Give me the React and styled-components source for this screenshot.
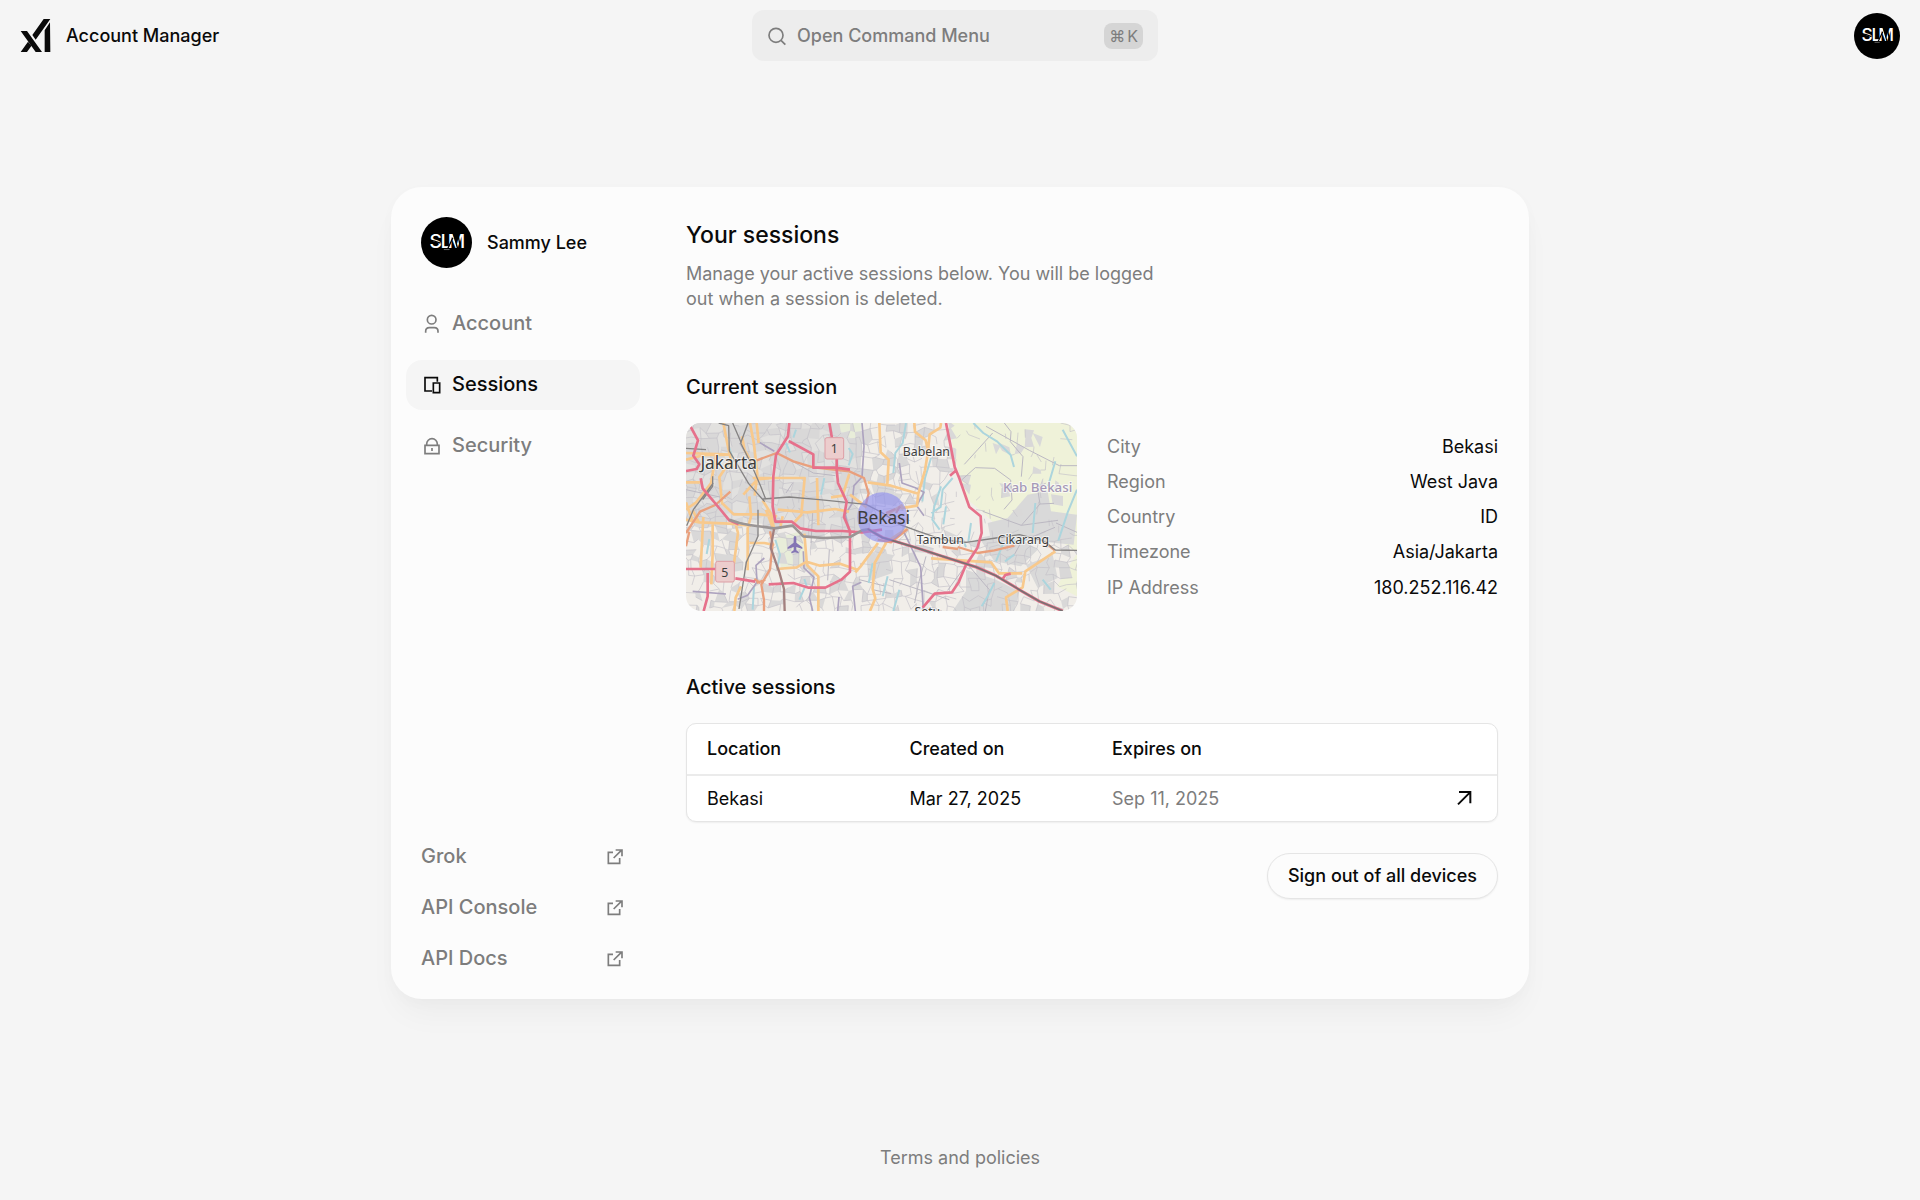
import React from "react";
import styled, { createGlobalStyle } from "styled-components";

const GlobalStyle = createGlobalStyle`
  * {
    box-sizing: border-box;
  }

  body {
    margin: 0;
    background: #f5f5f5;
    color: #0a0a0a;
    font-family: Inter, "Liberation Sans", sans-serif;
    font-size: 18px;
    line-height: 25px;
  }

  button {
    font: inherit;
    color: inherit;
    cursor: pointer;
  }

  a {
    color: inherit;
    text-decoration: none;
  }

  h1, h2, p, dl, dd {
    margin: 0;
  }
`;

const Page = styled.div`
  display: flex;
  flex-direction: column;
  min-height: 100vh;
`;

const Header = styled.header`
  display: grid;
  grid-template-columns: 1fr minmax(200px, 406px) 1fr;
  align-items: center;
  height: 71px;
  padding: 0 30px 0 20px;
`;

const Brand = styled.a`
  display: flex;
  align-items: center;
  gap: 15px;
  font-weight: 500;
`;

const SearchButton = styled.button`
  display: flex;
  align-items: center;
  gap: 10px;
  height: 51px;
  padding: 0 15px;
  border: 0;
  border-radius: 12px;
  background: #ededed;
  color: #7d7d7d;
  font-weight: 500;
`;

const Shortcut = styled.kbd`
  display: flex;
  gap: 2px;
  margin-left: auto;
  padding: 0 5px;
  border-radius: 8px;
  background: #d5d5d5;
  font-family: inherit;
  font-size: 16px;
  font-weight: 400;
  line-height: 26px;
`;

const AvatarButton = styled.button`
  display: flex;
  justify-self: end;
  margin-right: -10px;
  padding: 0;
  border: 0;
  border-radius: 50%;
  background: none;
`;

const Main = styled.main`
  display: flex;
  flex: 1;
  align-items: center;
  justify-content: center;
`;

const Card = styled.div`
  display: flex;
  width: 100%;
  max-width: 1138px;
  min-height: 812px;
  border-radius: 31px;
  background: #fcfcfc;
  box-shadow: 0 20px 32px -6px rgba(0, 0, 0, 0.04), 0 4px 16px rgba(0, 0, 0, 0.02);
`;

const Sidebar = styled.aside`
  display: flex;
  flex-direction: column;
  justify-content: space-between;
  flex: 0 0 264px;
  padding: 30px 15px 15px;
`;

const Profile = styled.div`
  display: flex;
  align-items: center;
  gap: 15px;
  margin-bottom: 31px;
  padding: 0 15px;
  font-weight: 500;
`;

const NavList = styled.nav`
  display: flex;
  flex-direction: column;
  gap: ${(props) => props.$gap}px;
`;

const NavItem = styled.a`
  display: flex;
  align-items: center;
  justify-content: ${(props) => (props.$spread ? "space-between" : "flex-start")};
  gap: 9px;
  height: 50px;
  padding: 0 15px;
  border-radius: 16px;
  background: ${(props) => (props.$active ? "#f5f5f5" : "transparent")};
  color: ${(props) => (props.$active ? "#0a0a0a" : "#7d7d7d")};
  font-size: 20px;
  font-weight: 500;
`;

const Content = styled.section`
  flex: 1;
  min-width: 0;
  padding: 31px;
`;

const Title = styled.h1`
  margin-bottom: 8px;
  font-size: 23px;
  font-weight: 500;
  line-height: 35px;
`;

const Description = styled.p`
  max-width: 480px;
  color: #7d7d7d;
`;

const SectionTitle = styled.h2`
  margin: 61px 0 20px;
  font-size: 20px;
  font-weight: 500;
  line-height: 31px;
`;

const CurrentSession = styled.div`
  display: grid;
  grid-template-columns: 1fr 1fr;
  gap: 30px;
`;

const Map = styled.svg`
  display: block;
  width: 100%;
  height: auto;
  border-radius: 15px;
`;

const Details = styled.dl`
  display: flex;
  flex-direction: column;
  justify-content: space-between;
  padding: 11px 0;
`;

const Detail = styled.div`
  display: flex;
  justify-content: space-between;

  dt {
    color: #7d7d7d;
  }
`;

const TableFrame = styled.div`
  overflow: hidden;
  border: 1px solid #e5e5e5;
  border-radius: 10px;
  background: #fff;
  box-shadow: 0 1px 2px rgba(0, 0, 0, 0.06);
`;

const Table = styled.table`
  width: 100%;
  border-collapse: collapse;
  table-layout: fixed;

  th,
  td {
    height: 46px;
    padding: 0 20px;
    text-align: left;
  }

  th {
    height: 51px;
    border-bottom: 2px solid #ebebeb;
    font-weight: 500;
  }
`;

const MutedCell = styled.td`
  color: #7d7d7d;
`;

const OpenButton = styled.button`
  display: flex;
  margin-left: auto;
  padding: 2px 3px;
  border: 0;
  background: none;
`;

const Actions = styled.div`
  display: flex;
  justify-content: flex-end;
  margin-top: 31px;
`;

const PillButton = styled.button`
  height: 46px;
  padding: 0 20px;
  border: 1px solid #e5e5e5;
  border-radius: 23px;
  background: #fcfcfc;
  box-shadow: 0 1px 2px rgba(0, 0, 0, 0.06);
  font-weight: 500;
`;

const Footer = styled.footer`
  display: flex;
  align-items: center;
  justify-content: center;
  height: 86px;
  color: #7d7d7d;
`;

const Icon = ({ size = 22, box = "0 0 66 66", children }) => (
  <svg
    width={size}
    height={size}
    viewBox={box}
    fill="none"
    stroke="currentColor"
    strokeWidth="5"
    aria-hidden="true"
  >
    {children}
  </svg>
);

const Logo = () => (
  <svg width="31" height="35" viewBox="60 52 93 105" fill="#0a0a0a" aria-hidden="true">
    <path d="M62 91h19l45 63h-19zM62 154h19l13-18-10-13zM151 55h-20L97 103l10 14zM134 89l16-24 1 89h-17z" />
  </svg>
);

const Avatar = ({ size }) => (
  <svg width={size} height={size} viewBox="0 0 152 152" role="img" aria-label="SLM">
    <circle cx="76" cy="76" r="76" fill="#000" />
    <text x="25" y="92" fill="#fff" fontFamily="Inter, sans-serif" fontSize="57" fontWeight="500">
      <tspan>S</tspan>
      <tspan x="58">L</tspan>
      <tspan x="80">M</tspan>
    </text>
    <path
      d="M24 68q16 2 34 10M79 96l16-34M96 46l13 48M109 46l9 48"
      fill="none"
      stroke="#000"
      strokeWidth="4"
    />
    <path d="M68 97h17" stroke="#666" strokeWidth="3" />
  </svg>
);

const AccountIcon = () => (
  <Icon>
    <circle cx="32" cy="20" r="13" />
    <path d="M14 59v-4q0-11 11-11h15q11 0 11 11v4" />
  </Icon>
);

const SessionsIcon = () => (
  <Icon>
    <path d="M33 51H12V11h37v12" />
    <path d="M37 27h19v29H37z" />
  </Icon>
);

const SecurityIcon = () => (
  <Icon>
    <path d="M12 31h42v25H12zM17 31v-4a16 16 0 0 1 32 0v4M33 39v9" />
  </Icon>
);

const ExternalIcon = () => (
  <Icon size={20} box="-6 -6 60 60">
    <path d="M18 10H4v33h34V27M20 27L43 4M26 3h19v19" />
  </Icon>
);

// Minor streets are a jittered grid, so the same seed always draws the same town.
const createRandom = (seed) => () => {
  seed = (seed * 16807) % 2147483647;
  return seed / 2147483647;
};

const buildStreets = () => {
  const random = createRandom(83);
  const cols = 52;
  const rows = 26;
  const points = [];
  for (let r = 0; r <= rows; r++) {
    for (let c = 0; c <= cols; c++) {
      points.push([
        Math.round(c * 23 + (random() - 0.5) * 20),
        Math.round(r * 22 + (random() - 0.5) * 20),
      ]);
    }
  }
  let streets = "";
  let blocks = "";
  for (let r = 0; r < rows; r++) {
    for (let c = 0; c < cols; c++) {
      const a = points[r * (cols + 1) + c];
      const b = points[r * (cols + 1) + c + 1];
      const d = points[(r + 1) * (cols + 1) + c];
      const e = points[(r + 1) * (cols + 1) + c + 1];
      const rural = a[0] > 790 && a[1] < 330;
      const chance = rural ? 0.04 : 0.5;
      if (random() < chance) streets += `M${a}L${b}`;
      if (random() < chance + 0.08) streets += `M${a}L${d}`;
      const built = rural ? 0.05 : a[0] < 540 && a[1] < 330 ? 0.62 : 0.22;
      if (random() < built) blocks += `M${a}L${b}L${e}L${d}Z`;
    }
  }
  return { streets, blocks };
};

const { streets, blocks } = buildStreets();

const rivers = [
  "M862 0l30 30 42 26 40 40 10 36",
  "M1173 200l-28 68-28 85M1130 20l43 80M1108 115l-22 75M1048 240l-8 90",
  "M660 0l-10 60-22 30-6 60M735 105l-18 60-8 70M800 165l-30 35-6 52-28 18",
  "M765 190l-20 60-6 40 22 30M780 250l-8 54M855 300l-8 56M830 350l10 22",
  "M950 365l-20 50M1020 350l-55 10M985 395l-28 20M925 480l-20 40-18 30",
  "M488 75l12 18-12 34M415 165l-10 50M300 60l12 28M330 20l-8 24",
  "M268 350l14 46-10 44M340 530l16-36M355 468l8 24M200 560l4-70M605 460l-15 60",
  "M70 348l-8 45M128 70l12 35M640 500l-18 64M560 420l-12 60M1070 470l24 30",
];

const boundaries = [
  "M528 0l6 70-6 92-24 26-6 54-20 32 10 46",
  "M352 385l2 50 30 28-14 60 10 41M235 405l-25 22 3 50-28 40-30 12",
  "M640 120l8 60 40 14 26 14-22 40 22 30M650 320l54 112 8 130",
  "M508 564l-8-74 26-12M455 564l4-42M215 55l50 30M20 505l100 8",
];

const lanes = [
  "M955 0l20 26-2 30 38 45-5 60M828 170l40-36 58 2 48 35 4 60-24 28",
  "M890 265l116 42 110-15M1006 307l56-64 42-2M1062 243l-8-50 25-12M920 30l-45 50-40 44",
  "M900 10l130 72 90 46h53M985 395l22-40 100-42M1110 300l63 28",
  "M610 470l180 60M560 500l55 12M830 440l-45 62M850 430l60 70-12 64",
  "M0 200l120 26M160 60l46 76M310 110l72 40 66 8M320 180l-20 30",
  "M380 270l-5 90M430 380l-5 92M520 470l80 20M720 400l-22 80-12 60",
];

const secondary = [
  "M112 0l14 72 14 62M192 0l12 64 10 90-8 64M0 110l54-14h62M0 90l136 5",
  "M168 40l8 42 20 34M90 95l-15 86-45 58-30 20M138 106l-38 56 8 78 35 34h80l50 6",
  "M275 260l90 8 82-10 42 8M0 290l40 8 90 4 65 6M22 300l-22-62M40 300l-20-38",
  "M52 282l-8 152M80 302v90l-4 92M190 220l5 60-10 36v126M148 300l8 30-12 90-12 42",
  "M200 165h70l86 0-10 110-20 22M260 165l-46 4-42 46M490 152l-20 66-35 5",
  "M393 165l4 142M355 332l8 94 34 34v104M0 178h50M230 232l25 40 10 48",
  "M545 178l70 10 82 24-4 36-50 8M580 0l4 88 24 22-4 74M685 0l2 26 32 26 8 36",
  "M765 0l-2 14-32 20-6 58-8 50-20 70M190 360h45l30 6M272 438l60-5 30-17 40 12 60-6 56 20",
  "M600 360l-34 60-6 78 8 28-16 38M576 360l-52 70-16 18M735 406l180 12 24 33h70",
  "M1108 385l-90 60-8 48-50 30 5 41M660 318l-60 40M492 215l50 38M165 490l-16 34-4 40",
  "M212 0l6 60M240 260l22 58M290 280l-8 38M650 246l-62 38",
];

const orangeRoads = [
  "M212 112l60-22 50 25 60 18 108 12 44 20 14 46-8 32",
  "M252 325l8 38-8 76-26 46 8 46v33M0 330l42-64 46-20 45-40M0 370l10-44",
  "M815 372l60 18 50-8 60-14M770 372l46 6M1080 360l26 22M600 270l28-12M630 270l12-20",
  "M212 480l26-10M205 468l18 12M575 350l40 8 50-40",
];

const railways = [
  "M98 0l30 8 2 76 58 98 48 54M140 0l26 60M186 0l-22 60 30 60 30 70 14 36",
  "M230 228L310 222 400 230 540 244 590 270 640 304 700 326 770 350 840 358 930 345 1000 335 1070 352 1108 381 1173 382",
  "M216 260v80l-35 78-22 140M82 180l-60 80-20 48M0 76l60 4M50 230l30-40v-30",
];

const motorways = [
  "M310 0l-4 40-36 56-8 64-2 90 8 46h50l24 20 48 8h80l58 4 60-8",
  "M308 54l74 40v40h68l42 6M430 0l8 46M452 70v70l4 40 26 56-8 46 18 42v122l-26 24-48 24h-50l-46-14-74 4",
  "M8 0l28 52-14 46 18 26-8 14-32 6M44 166l6 30 52 62 28 34 28 12",
  "M0 438h90M148 466l60 10M65 450v70l-12 44",
  "M780 0L794 70 806 132 820 166 850 252 884 280 887 330 874 375 838 430 818 478 798 508 746 512 710 554M808 144l-16 14",
  "M950 468l8-12 16-4",
];

const SessionMap = () => (
  <Map viewBox="0 0 1173 564" role="img" aria-label="Map of Bekasi">
    <path d="M0 0h1173v564H0z" fill="#f1eee9" />
    <path d="M0 0h510l20 165-25 160-180-12-150-16H0z" fill="#e2e1df" />
    <path
      d="M790 0h383v520l-60-30 60-100-90-65-130 5-60-60-48-40-40-125z"
      fill="#eff2d9"
    />
    <path
      d="M270 345l75-20 20 95-80 15zM440 8l40-8h46l-4 60-30-16z"
      fill="#e8edd9"
    />
    <path
      d="M905 300l60-15 60-70 60-10 10 60 78 10-10 90-110-10-60-5-80-8zM840 440l90 30 70 35-15 59H800l40-60zM552 170l70 20 10 60-60-10zM880 345l90-20 85 55-50 50-80-15zM1020 425l80-30 15 70-60 30zM825 180l30 5-5 30zM1040 30l30 12-8 30zM920 60l24 8-14 26zM540 400l60-20 20 70-70 24zM940 180l42 10-20 30z"
      fill="#d9d9d9"
    />
    <path d={blocks} fill="#d9d8d8" />
    <path d={streets} fill="none" stroke="#c4c1c9" strokeWidth="2" />
    <g fill="none" strokeLinejoin="round">
      <path d={lanes.join("")} stroke="#bbb8c2" strokeWidth="3" />
      <path d={rivers.join("")} stroke="#acd5dd" strokeWidth="6" />
      <path d={boundaries.join("")} stroke="#ada3bf" strokeWidth="5" />
      <path d={secondary.join("")} stroke="#f8c98c" strokeWidth="8" />
      <path d={orangeRoads.join("")} stroke="#e9a07d" strokeWidth="7" />
      <path d={railways.join("")} stroke="#858383" strokeWidth="4" />
      <path d={motorways.join("")} stroke="#e6718b" strokeWidth="8" />
      <path
        d="M130 290L160 300 190 306 264 316 320 308 352 340 412 345 492 342 528 322 550 318"
        stroke="#9a9595"
        strokeWidth="8"
      />
      <path
        d="M545 318L590 344 690 374 770 400 870 432 930 458 1000 500 1060 535 1130 564"
        stroke="#e6718b"
        strokeWidth="9"
      />
      <path
        d="M545 318L590 344 690 374 770 400 870 432 930 458 1000 500 1060 535 1130 564"
        stroke="#777272"
        strokeWidth="5"
      />
      <path
        d="M264 318L254 374 280 448 294 498 296 564"
        stroke="#a3807f"
        strokeWidth="7"
      />
    </g>
    <path
      d="M323 343q4-8 8 0v16l18 14v5l-18-6v10l7 5v4l-11-3-11 3v-4l7-5v-10l-18 6v-5l18-14z"
      fill="#8475b4"
    />
    <g fill="#eccdcd" stroke="#dd9ea5" strokeWidth="3">
      <rect x="417" y="44" width="56" height="64" rx="6" />
      <rect x="89" y="415" width="56" height="62" rx="6" />
    </g>
    <circle cx="589" cy="283" r="75" fill="#8a8af0" fillOpacity="0.6" />
    <g
      fill="#3d3d3d"
      stroke="#fff"
      strokeOpacity="0.65"
      strokeWidth="6"
      strokeLinejoin="round"
      paintOrder="stroke"
      textAnchor="middle"
      fontFamily="Noto Sans, sans-serif"
      fontSize="37"
    >
      <text x="445" y="91" strokeWidth="0">1</text>
      <text x="116" y="461" strokeWidth="0">5</text>
      <text x="128" y="139" fontSize="52">Jakarta</text>
      <text x="593" y="303" fontSize="52" strokeWidth="0">Bekasi</text>
      <text x="721" y="100">Babelan</text>
      <text x="763" y="364">Tambun</text>
      <text x="1012" y="364">Cikarang</text>
      <text x="724" y="578">Setu</text>
      <text x="951" y="208" fill="#a599b8" fontSize="40" fontWeight="500" textAnchor="start">
        Kab Bekasi
      </text>
    </g>
  </Map>
);

const navItems = [
  { label: "Account", icon: <AccountIcon /> },
  { label: "Sessions", icon: <SessionsIcon />, active: true },
  { label: "Security", icon: <SecurityIcon /> },
];

const externalLinks = ["Grok", "API Console", "API Docs"];

const details = [
  ["City", "Bekasi"],
  ["Region", "West Java"],
  ["Country", "ID"],
  ["Timezone", "Asia/Jakarta"],
  ["IP Address", "180.252.116.42"],
];

const App = () => (
  <Page>
    <GlobalStyle />
    <Header>
      <Brand href="#">
        <Logo />
        Account Manager
      </Brand>
      <SearchButton type="button">
        <Icon size={20} box="0 0 60 60">
          <circle cx="27" cy="28" r="21" />
          <path d="M42 43l13 13" />
        </Icon>
        Open Command Menu
        <Shortcut>
          <span>⌘</span>
          <span>K</span>
        </Shortcut>
      </SearchButton>
      <AvatarButton type="button" aria-label="Profile">
        <Avatar size={46} />
      </AvatarButton>
    </Header>
    <Main>
      <Card>
        <Sidebar>
          <div>
            <Profile>
              <Avatar size={51} />
              Sammy Lee
            </Profile>
            <NavList $gap={11}>
              {navItems.map((item) => (
                <NavItem key={item.label} href="#" $active={item.active}>
                  {item.icon}
                  {item.label}
                </NavItem>
              ))}
            </NavList>
          </div>
          <NavList $gap={1}>
            {externalLinks.map((label) => (
              <NavItem key={label} href="#" $spread>
                {label}
                <ExternalIcon />
              </NavItem>
            ))}
          </NavList>
        </Sidebar>
        <Content>
          <Title>Your sessions</Title>
          <Description>
            Manage your active sessions below. You will be logged out when a session is deleted.
          </Description>
          <SectionTitle>Current session</SectionTitle>
          <CurrentSession>
            <SessionMap />
            <Details>
              {details.map(([name, value]) => (
                <Detail key={name}>
                  <dt>{name}</dt>
                  <dd>{value}</dd>
                </Detail>
              ))}
            </Details>
          </CurrentSession>
          <SectionTitle>Active sessions</SectionTitle>
          <TableFrame>
            <Table>
              <thead>
                <tr>
                  <th>Location</th>
                  <th>Created on</th>
                  <th>Expires on</th>
                  <th aria-label="Open" />
                </tr>
              </thead>
              <tbody>
                <tr>
                  <td>Bekasi</td>
                  <td>Mar 27, 2025</td>
                  <MutedCell>Sep 11, 2025</MutedCell>
                  <td>
                    <OpenButton type="button" aria-label="Open session">
                      <Icon size={20} box="0 0 60 60">
                        <path d="M12 49L48 13M15 12h34v34" strokeWidth="6" />
                      </Icon>
                    </OpenButton>
                  </td>
                </tr>
              </tbody>
            </Table>
          </TableFrame>
          <Actions>
            <PillButton type="button">Sign out of all devices</PillButton>
          </Actions>
        </Content>
      </Card>
    </Main>
    <Footer>
      <a href="#">Terms and policies</a>
    </Footer>
  </Page>
);

export default App;
